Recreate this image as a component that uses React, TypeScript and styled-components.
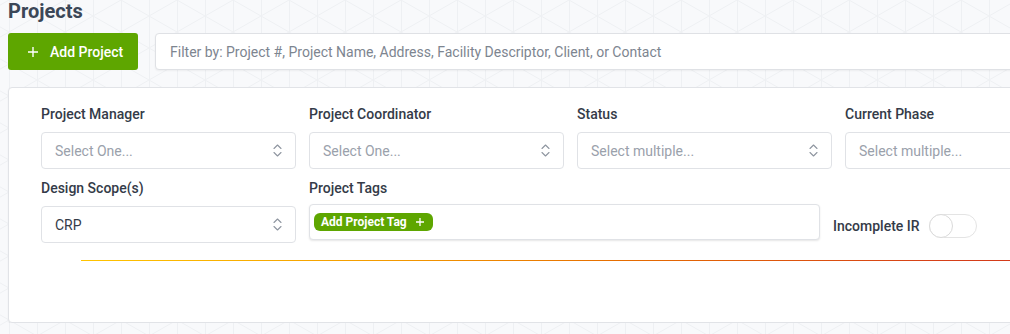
import React from "react";
import styled, { createGlobalStyle } from "styled-components";

const gridSvg = encodeURIComponent(
  `<svg xmlns="http://www.w3.org/2000/svg" width="56" height="32"><g stroke="#eef0f3" stroke-width="1" fill="none"><path d="M0.5 0V32M28.5 0V32"/><path d="M0 0L56 32M0 32L56 0"/></g></svg>`
);

const GlobalStyle = createGlobalStyle`
  html, body {
    margin: 0;
    padding: 0;
    overflow: hidden;
    background-color: #f8f9fb;
    background-image: url("data:image/svg+xml,${gridSvg}");
    background-position: 9px 0;
    font-family: Roboto, "Liberation Sans", Arial, sans-serif;
    color: #343b48;
  }
  * { box-sizing: border-box; }
`;

const Page = styled.div`
  width: 1300px;
  padding: 0 0 0 8px;
  display: flex;
  flex-direction: column;
`;

const Title = styled.h1`
  margin: 0;
  font-size: 20px;
  line-height: 22px;
  font-weight: 700;
  color: #3b4757;
`;

const Toolbar = styled.div`
  margin-top: 11px;
  display: flex;
  gap: 17px;
  align-items: stretch;
`;

const PrimaryButton = styled.button`
  height: 37px;
  width: 130px;
  padding: 0 0 0 20px;
  display: flex;
  align-items: center;
  gap: 12px;
  border: none;
  border-radius: 3px;
  background: #5ea600;
  color: #fff;
  font-family: inherit;
  font-size: 14px;
  font-weight: 500;
  cursor: pointer;
`;

const FilterInput = styled.div`
  flex: 1;
  height: 37px;
  display: flex;
  align-items: center;
  padding-left: 14px;
  background: #fff;
  border: 1px solid #dfe1e5;
  border-radius: 4px;
  box-shadow: 0 1px 2px rgba(0, 0, 0, 0.05);
  font-size: 14px;
  color: #7d8590;
`;

const Card = styled.section`
  margin-top: 17px;
  height: 236px;
  background: #fff;
  border: 1px solid #e1e3e7;
  border-radius: 4px;
  box-shadow: 0 1px 2px rgba(0, 0, 0, 0.06);
  display: flex;
  flex-direction: column;
`;

const Form = styled.div`
  padding: 16px 0 0 32px;
  display: flex;
  flex-direction: column;
  gap: 9px;
`;

const Row = styled.div`
  display: flex;
  gap: 13px;
  align-items: flex-start;
`;

const Field = styled.div<{ $w?: number }>`
  width: ${(p) => p.$w ?? 255}px;
  display: flex;
  flex-direction: column;
  gap: 8px;
`;

const Label = styled.label`
  font-size: 14px;
  line-height: 20px;
  font-weight: 500;
  color: #343b48;
`;

const Select = styled.div<{ $filled?: boolean }>`
  height: 37px;
  display: flex;
  align-items: center;
  justify-content: space-between;
  padding: 0 13px 0 13px;
  border: 1px solid #e0e2e6;
  border-radius: 4px;
  background: #fff;
  font-size: 14px;
  color: ${(p) => (p.$filled ? "#343b48" : "#9aa1ab")};
`;

const TagBox = styled.div`
  margin-top: -2px;
  height: 36px;
  display: flex;
  align-items: center;
  padding-left: 4px;
  border: 1px solid #e0e2e6;
  border-radius: 4px;
  background: #fff;
  box-shadow: 0 1px 2px rgba(0, 0, 0, 0.1);
`;

const TagButton = styled.span`
  height: 18px;
  display: inline-flex;
  align-items: center;
  gap: 9px;
  padding: 0 9px 0 7px;
  border-radius: 6px;
  background: #5ea600;
  color: #fff;
  font-size: 12px;
  font-weight: 700;
`;

const ToggleWrap = styled.div`
  padding-top: 36px;
  display: flex;
  align-items: center;
  gap: 9px;
`;

const ToggleLabel = styled.span`
  font-size: 14px;
  font-weight: 500;
  line-height: 20px;
  color: #343b48;
`;

const Switch = styled.span`
  width: 48px;
  height: 24px;
  border: 1px solid #e4e4e4;
  border-radius: 12px;
  background: #fff;
  display: flex;
  align-items: center;
`;

const Knob = styled.span`
  width: 24px;
  height: 24px;
  margin-left: -1px;
  border-radius: 50%;
  border: 1px solid #dadada;
  background: #fff;
`;

const Loader = styled.div`
  margin: 17px 0 0 72px;
  height: 1px;
  background: linear-gradient(90deg, #ffc400 0%, #f39a00 25%, #e56b00 45%, #d64118 70%, #c8201e 100%);
`;

const Chevrons = () => (
  <svg width="9" height="13" viewBox="0 0 9 13" fill="none" stroke="#8f96a0" strokeWidth="1.1" strokeLinecap="round" strokeLinejoin="round">
    <path d="M1 4.5L4.5 1L8 4.5" />
    <path d="M1 8.5L4.5 12L8 8.5" />
  </svg>
);

const Plus = ({ size, stroke }: { size: number; stroke: number }) => (
  <svg width={size} height={size} viewBox={`0 0 ${size} ${size}`} stroke="currentColor" strokeWidth={stroke} fill="none">
    <path d={`M${size / 2} 0V${size}M0 ${size / 2}H${size}`} />
  </svg>
);

const SelectField = ({ label, value, filled }: { label: string; value: string; filled?: boolean }) => (
  <Field>
    <Label>{label}</Label>
    <Select $filled={filled}>
      <span>{value}</span>
      <Chevrons />
    </Select>
  </Field>
);

export default function App() {
  return (
    <>
      <GlobalStyle />
      <Page>
        <Title>Projects</Title>
        <Toolbar>
          <PrimaryButton>
            <Plus size={10} stroke={1.4} />
            Add Project
          </PrimaryButton>
          <FilterInput>Filter by: Project #, Project Name, Address, Facility Descriptor, Client, or Contact</FilterInput>
        </Toolbar>
        <Card>
          <Form>
            <Row>
              <SelectField label="Project Manager" value="Select One..." />
              <SelectField label="Project Coordinator" value="Select One..." />
              <SelectField label="Status" value="Select multiple..." />
              <SelectField label="Current Phase" value="Select multiple..." />
            </Row>
            <Row>
              <SelectField label="Design Scope(s)" value="CRP" filled />
              <Field $w={511}>
                <Label>Project Tags</Label>
                <TagBox>
                  <TagButton>
                    Add Project Tag
                    <Plus size={8} stroke={1.3} />
                  </TagButton>
                </TagBox>
              </Field>
              <ToggleWrap>
                <ToggleLabel>Incomplete IR</ToggleLabel>
                <Switch>
                  <Knob />
                </Switch>
              </ToggleWrap>
            </Row>
          </Form>
          <Loader />
        </Card>
      </Page>
    </>
  );
}
